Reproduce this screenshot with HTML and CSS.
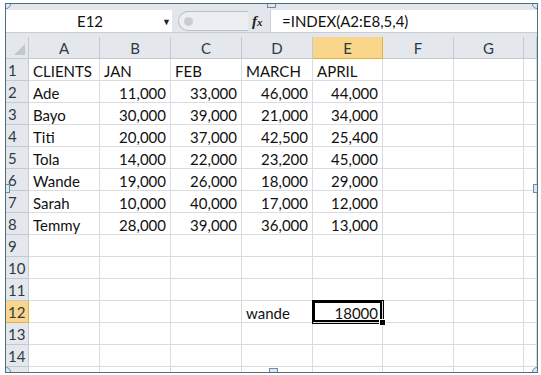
FILE: index.html
```html
<!DOCTYPE html>
<html lang="en">
<head>
    <meta charset="UTF-8">
    <meta name="viewport" content="width=device-width, initial-scale=1.0">
    <title>INDEX example</title>
    <link rel="stylesheet" href="styles.css">
</head>
<body>
<div class="frame">
    <div class="strip"></div>

    <div class="formula-bar">
        <div class="name-box">
            <span class="name">E12</span>
            <span class="arrow">&#9660;</span>
        </div>
        <div class="tools">
            <div class="pill"><span class="dot"></span></div>
            <span class="fx"><i>f</i><i class="x">x</i></span>
        </div>
        <div class="formula">=INDEX(A2:E8,5,4)</div>
    </div>

    <div class="strip low"></div>

    <div class="sheet">
        <div class="corner"><span class="tri"></span></div>
        <div class="col">A</div>
        <div class="col">B</div>
        <div class="col">C</div>
        <div class="col">D</div>
        <div class="col active">E</div>
        <div class="col">F</div>
        <div class="col">G</div>
        <div class="col"></div>

        <div class="row">1</div>
        <div class="cell">CLIENTS</div><div class="cell">JAN</div><div class="cell">FEB</div><div class="cell">MARCH</div><div class="cell">APRIL</div><div class="cell"></div><div class="cell"></div><div class="cell"></div>

        <div class="row">2</div>
        <div class="cell">Ade</div><div class="cell num">11,000</div><div class="cell num">33,000</div><div class="cell num">46,000</div><div class="cell num">44,000</div><div class="cell"></div><div class="cell"></div><div class="cell"></div>

        <div class="row">3</div>
        <div class="cell">Bayo</div><div class="cell num">30,000</div><div class="cell num">39,000</div><div class="cell num">21,000</div><div class="cell num">34,000</div><div class="cell"></div><div class="cell"></div><div class="cell"></div>

        <div class="row">4</div>
        <div class="cell">Titi</div><div class="cell num">20,000</div><div class="cell num">37,000</div><div class="cell num">42,500</div><div class="cell num">25,400</div><div class="cell"></div><div class="cell"></div><div class="cell"></div>

        <div class="row">5</div>
        <div class="cell">Tola</div><div class="cell num">14,000</div><div class="cell num">22,000</div><div class="cell num">23,200</div><div class="cell num">45,000</div><div class="cell"></div><div class="cell"></div><div class="cell"></div>

        <div class="row">6</div>
        <div class="cell">Wande</div><div class="cell num">19,000</div><div class="cell num">26,000</div><div class="cell num">18,000</div><div class="cell num">29,000</div><div class="cell"></div><div class="cell"></div><div class="cell"></div>

        <div class="row">7</div>
        <div class="cell">Sarah</div><div class="cell num">10,000</div><div class="cell num">40,000</div><div class="cell num">17,000</div><div class="cell num">12,000</div><div class="cell"></div><div class="cell"></div><div class="cell"></div>

        <div class="row">8</div>
        <div class="cell">Temmy</div><div class="cell num">28,000</div><div class="cell num">39,000</div><div class="cell num">36,000</div><div class="cell num">13,000</div><div class="cell"></div><div class="cell"></div><div class="cell"></div>

        <div class="row">9</div>
        <div class="cell"></div><div class="cell"></div><div class="cell"></div><div class="cell"></div><div class="cell"></div><div class="cell"></div><div class="cell"></div><div class="cell"></div>

        <div class="row">10</div>
        <div class="cell"></div><div class="cell"></div><div class="cell"></div><div class="cell"></div><div class="cell"></div><div class="cell"></div><div class="cell"></div><div class="cell"></div>

        <div class="row">11</div>
        <div class="cell"></div><div class="cell"></div><div class="cell"></div><div class="cell"></div><div class="cell"></div><div class="cell"></div><div class="cell"></div><div class="cell"></div>

        <div class="row active">12</div>
        <div class="cell"></div><div class="cell"></div><div class="cell"></div><div class="cell">wande</div><div class="cell num selected">18000</div><div class="cell"></div><div class="cell"></div><div class="cell"></div>

        <div class="row">13</div>
        <div class="cell"></div><div class="cell"></div><div class="cell"></div><div class="cell"></div><div class="cell"></div><div class="cell"></div><div class="cell"></div><div class="cell"></div>

        <div class="row">14</div>
        <div class="cell"></div><div class="cell"></div><div class="cell"></div><div class="cell"></div><div class="cell"></div><div class="cell"></div><div class="cell"></div><div class="cell"></div>

        <div class="row"></div>
        <div class="cell"></div><div class="cell"></div><div class="cell"></div><div class="cell"></div><div class="cell"></div><div class="cell"></div><div class="cell"></div><div class="cell"></div>
    </div>

    <span class="handle round tl"></span>
    <span class="handle square tm"></span>
    <span class="handle round tr"></span>
    <span class="handle square ml"></span>
    <span class="handle square mr"></span>
    <span class="handle round bl"></span>
    <span class="handle square bm"></span>
    <span class="handle round br"></span>
</div>
</body>
</html>
```

FILE: styles.css
```css
body {
    margin: 0;
    background: white;
    font-family: Lato, "Open Sans", sans-serif;
    color: #111;
}

.frame {
    position: relative;
    margin: 3px 0 0 5px;
    width: 531px;
    height: 368px;
    border: 1px solid #4f6d80;
    overflow: hidden;
}

.strip {
    height: 6px;
    background: #e3e7ec;
}

.strip.low {
    height: 5px;
    border-top: 1px solid #c9ced4;
    box-sizing: border-box;
}

.formula-bar {
    display: flex;
    height: 22px;
    background: white;
}

.name-box {
    width: 166px;
    display: flex;
    align-items: center;
    font-size: 15px;
}

.name {
    flex: 1;
    text-align: center;
    padding-left: 12px;
}

.arrow {
    font-size: 9px;
    color: #222;
    width: 10px;
}

.tools {
    width: 98px;
    display: flex;
    align-items: center;
    background: #e3e7ec;
}

.pill {
    margin-left: 6px;
    width: 70px;
    height: 20px;
    border: 1px solid #b9c0c8;
    border-right: none;
    border-radius: 11px 0 0 11px;
    background: #eceef1;
    box-sizing: border-box;
    display: flex;
    align-items: center;
}

.dot {
    margin-left: 5px;
    width: 9px;
    height: 9px;
    border-radius: 50%;
    background: #c9cdd2;
}

.fx {
    margin-left: 4px;
    font-family: "Liberation Serif", serif;
    font-size: 15px;
    font-weight: bold;
    color: #222;
}

.fx .x {
    font-size: 11px;
}

.formula {
    flex: 1;
    border-left: 1px solid #c9ced4;
    padding-left: 11px;
    font-size: 15px;
    line-height: 22px;
}

.sheet {
    display: grid;
    grid-template-columns: 23px 71px 71px 71px 71px 70px 71px 70px 13px;
    grid-auto-rows: 22px;
    font-size: 15px;
}

.sheet > div {
    box-sizing: border-box;
    border-right: 1px solid #dadcdf;
    border-bottom: 1px solid #dadcdf;
    white-space: nowrap;
    overflow: hidden;
}

.corner, .col, .row {
    background: #e4e8ed;
    color: #2e3a45;
}

.sheet > .corner, .sheet > .col, .sheet > .row {
    border-color: #c3c9d0;
}

.corner {
    position: relative;
}

.tri {
    position: absolute;
    right: 3px;
    bottom: 3px;
    border-left: 11px solid transparent;
    border-bottom: 11px solid #c2c7cd;
}

.col {
    text-align: center;
    line-height: 22px;
}

.row {
    padding-left: 2px;
    line-height: 23px;
}

.sheet > .active {
    background: #f9d68a;
    border-color: #e0b04f;
}

.cell {
    padding: 0 4px;
    line-height: 24px;
}

.num {
    text-align: right;
}

.sheet > .selected {
    position: relative;
    overflow: visible;
    box-shadow: inset 0 0 0 2px #000, 0 0 0 1px #000;
}

.selected::after {
    content: "";
    position: absolute;
    right: -4px;
    bottom: -4px;
    width: 5px;
    height: 5px;
    background: #000;
    border: 1px solid white;
}

.handle {
    position: absolute;
    width: 7px;
    height: 7px;
    background: #dbe7f3;
    border: 1px solid #6f8ca3;
}

.round {
    width: 8px;
    height: 8px;
    border-radius: 50%;
}

.tl { left: -5px; top: -5px; }
.tr { right: -5px; top: -5px; }
.bl { left: -5px; bottom: -5px; }
.br { right: -5px; bottom: -5px; }
.tm { left: 261px; top: -5px; }
.bm { left: 263px; bottom: -5px; }
.ml { left: -5px; top: 180px; }
.mr { right: -5px; top: 180px; }
```
